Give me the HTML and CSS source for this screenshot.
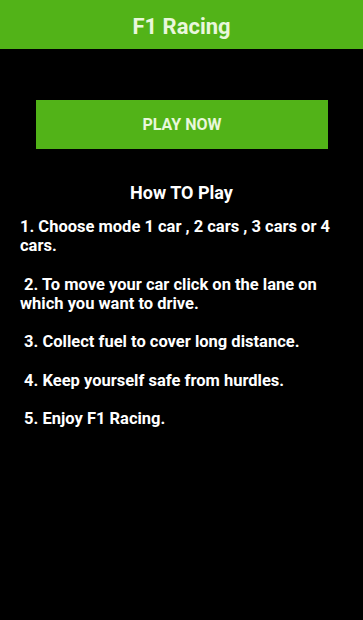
FILE: index.html
```html
<!DOCTYPE html>
<html>
<head>
<meta charset="utf-8">
<link rel="stylesheet" href="styles.css">
</head>
<body>
<header class="appbar">F1 Racing</header>
<main class="content">
  <div class="btn-wrap"><button class="play">PLAY NOW</button></div>
  <h2 class="howto">How TO Play</h2>
  <p class="steps">1. Choose mode 1 car , 2 cars , 3 cars or 4 cars.

 2. To move your car click on the lane on which you want to drive.

 3. Collect fuel to cover long distance.

 4. Keep yourself safe from hurdles.

 5. Enjoy F1 Racing.</p>
</main>
</body>
</html>
```
FILE: styles.css
```css
html, body {
  margin: 0;
  padding: 0;
  background: #000;
  height: 100%;
}
body {
  font-family: Roboto, "Liberation Sans", sans-serif;
  color: #fff;
  width: 363px;
  height: 620px;
  overflow: hidden;
}
.appbar {
  box-sizing: border-box;
  height: 49px;
  padding-top: 3px;
  background: #52b318;
  color: #e9f7dc;
  font-weight: bold;
  font-size: 22px;
  display: flex;
  align-items: center;
  justify-content: center;
}
.content {
  padding: 0 20px;
}
.btn-wrap {
  padding: 51px 15px 0 16px;
}
.play {
  display: block;
  width: 100%;
  height: 49px;
  border: none;
  background: #52b318;
  color: #e9f7dc;
  font-family: Roboto, "Liberation Sans", sans-serif;
  font-weight: bold;
  font-size: 16px;
  padding: 0;
}
.howto {
  margin: 32px 0 0;
  text-align: center;
  font-size: 18px;
  font-weight: bold;
  line-height: 24px;
}
.steps {
  margin: 12px 0 0;
  white-space: pre-wrap;
  font-size: 16.5px;
  font-weight: bold;
  line-height: 19.2px;
}
```
